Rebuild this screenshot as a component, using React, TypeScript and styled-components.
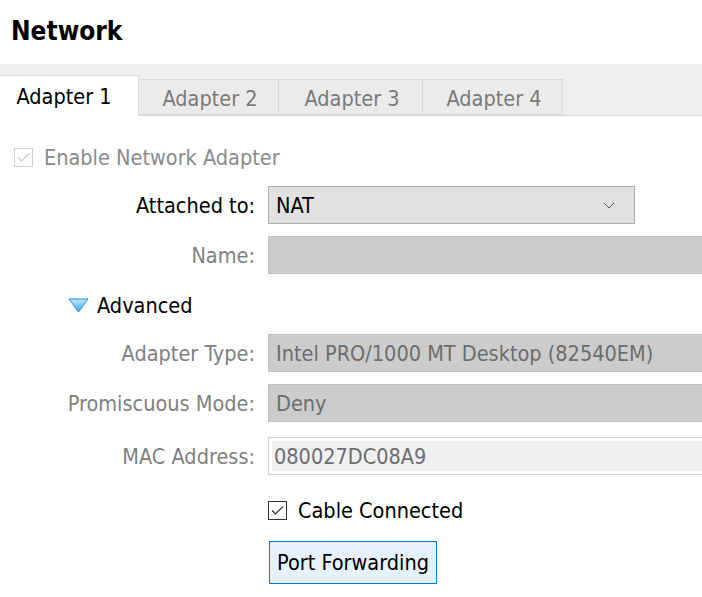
import React from "react";
import styled, { createGlobalStyle } from "styled-components";

const GlobalStyle = createGlobalStyle`
  html, body {
    margin: 0;
    padding: 0;
    background: #ffffff;
  }
  body {
    font-family: "DejaVu Sans Condensed", "DejaVu Sans", sans-serif;
  }
`;

const Page = styled.div`
  width: 702px;
  height: 597px;
  overflow: hidden;
  background: #ffffff;
  color: #000;
`;

const Title = styled.h1`
  margin: 0;
  height: 64px;
  padding-left: 11px;
  font-size: 26px;
  font-weight: bold;
  line-height: 62px;
`;

const TabBar = styled.div`
  display: flex;
  align-items: flex-end;
  height: 52px;
  background: #efefef;
  border-bottom: 1px solid #d9d9d9;
  box-sizing: border-box;
`;

const Tab = styled.div<{ $active?: boolean; $w: number }>`
  box-sizing: border-box;
  width: ${(p) => p.$w}px;
  height: ${(p) => (p.$active ? 41 : 36)}px;
  margin-bottom: ${(p) => (p.$active ? -1 : 0)}px;
  background: ${(p) => (p.$active ? "#ffffff" : "#ebebeb")};
  border: 1px solid #d9d9d9;
  border-bottom: ${(p) => (p.$active ? "none" : "1px solid #d9d9d9")};
  border-left: ${(p) => (p.$active ? "none" : "1px solid #d9d9d9")};
  margin-left: -1px;
  color: ${(p) => (p.$active ? "#000" : "#7a7a7a")};
  font-size: 21.5px;
  display: flex;
  align-items: center;
  justify-content: center;
  padding-top: ${(p) => (p.$active ? 0 : 2)}px;
  padding-right: ${(p) => (p.$active ? 10 : 0)}px;
  padding-left: ${(p) => (p.$active ? 0 : 3)}px;
  &:first-child {
    margin-left: 0;
  }
`;

const Body = styled.div`
  display: flex;
  flex-direction: column;
  font-size: 21.5px;
`;

const CheckRow = styled.label<{ $muted?: boolean; $indent: number; $top: number }>`
  display: flex;
  align-items: center;
  gap: 11px;
  height: 20px;
  margin-top: ${(p) => p.$top}px;
  padding-left: ${(p) => p.$indent}px;
  color: ${(p) => (p.$muted ? "#8a8a8a" : "#000")};
`;

const Box = styled.span<{ $muted?: boolean }>`
  box-sizing: border-box;
  flex: none;
  width: 19px;
  height: 19px;
  border: 1px solid ${(p) => (p.$muted ? "#cfcfcf" : "#333333")};
  background: #fff;
  display: flex;
  align-items: center;
  justify-content: center;
`;

const Row = styled.div<{ $top: number }>`
  display: grid;
  grid-template-columns: 255px 1fr;
  column-gap: 13px;
  align-items: center;
  margin-top: ${(p) => p.$top}px;
`;

const Label = styled.span<{ $muted?: boolean }>`
  text-align: right;
  white-space: nowrap;
  color: ${(p) => (p.$muted ? "#808080" : "#000")};
`;

const Field = styled.div<{ $kind: "select" | "disabled" | "readonly"; $w: number }>`
  box-sizing: border-box;
  width: ${(p) => p.$w}px;
  height: 38px;
  display: flex;
  align-items: center;
  justify-content: space-between;
  padding: 0 ${(p) => (p.$kind === "readonly" ? 5 : 7)}px;
  white-space: nowrap;
  background: ${(p) =>
    p.$kind === "select" ? "#e1e1e1" : p.$kind === "disabled" ? "#cccccc" : "#f0f0f0"};
  border: 1px solid
    ${(p) => (p.$kind === "select" ? "#adadad" : p.$kind === "disabled" ? "#bfbfbf" : "#cccccc")};
  box-shadow: ${(p) => (p.$kind === "readonly" ? "inset 0 0 0 3px #ffffff" : "none")};
  color: ${(p) => (p.$kind === "select" ? "#000" : "#6d6d6d")};
`;

const Chevron = styled.svg`
  margin-right: 12px;
`;

const Expander = styled.div`
  display: flex;
  align-items: center;
  gap: 8px;
  margin-top: 21px;
  padding-left: 68px;
  height: 20px;
`;

const Indented = styled.div<{ $top: number }>`
  margin-top: ${(p) => p.$top}px;
  padding-left: 268px;
`;

const Button = styled.button`
  box-sizing: border-box;
  height: 43px;
  padding: 0 7px;
  background: #e5f1fb;
  border: 1px solid #0078d7;
  font-family: inherit;
  font-size: 21.5px;
  color: #000;
  margin-left: 1px;
`;

const Check = ({ color }: { color: string }) => (
  <svg width="13" height="11" viewBox="0 0 13 11">
    <path d="M1 5.5 L4.5 9 L12 1.5" fill="none" stroke={color} strokeWidth="1.2" />
  </svg>
);

export default function App() {
  return (
    <>
      <GlobalStyle />
      <Page>
        <Title>Network</Title>
        <TabBar>
          <Tab $active $w={139}>Adapter 1</Tab>
          <Tab $w={141}>Adapter 2</Tab>
          <Tab $w={145}>Adapter 3</Tab>
          <Tab $w={141}>Adapter 4</Tab>
        </TabBar>
        <Body>
          <CheckRow $muted $indent={14} $top={31}>
            <Box $muted>
              <Check color="#c8c8c8" />
            </Box>
            Enable Network Adapter
          </CheckRow>
          <Row $top={19}>
            <Label>Attached to:</Label>
            <Field $kind="select" $w={367}>
              NAT
              <Chevron width="12" height="7" viewBox="0 0 12 7">
                <path d="M1 1 L6 6 L11 1" fill="none" stroke="#555" strokeWidth="1" />
              </Chevron>
            </Field>
          </Row>
          <Row $top={12}>
            <Label $muted>Name:</Label>
            <Field $kind="disabled" $w={450} />
          </Row>
          <Expander>
            <svg width="21" height="15" viewBox="0 0 21 15">
              <defs>
                <linearGradient id="tri" x1="0" y1="0" x2="0" y2="1">
                  <stop offset="0" stopColor="#bfeaff" />
                  <stop offset="1" stopColor="#3aa8ec" />
                </linearGradient>
              </defs>
              <path d="M1 1 L20 1 L10.5 14 Z" fill="url(#tri)" stroke="#2a8ad4" strokeWidth="1" />
            </svg>
            Advanced
          </Expander>
          <Row $top={19}>
            <Label $muted>Adapter Type:</Label>
            <Field $kind="disabled" $w={450}>Intel PRO/1000 MT Desktop (82540EM)</Field>
          </Row>
          <Row $top={12}>
            <Label $muted>Promiscuous Mode:</Label>
            <Field $kind="disabled" $w={450}>Deny</Field>
          </Row>
          <Row $top={15}>
            <Label $muted>MAC Address:</Label>
            <Field $kind="readonly" $w={450}>080027DC08A9</Field>
          </Row>
          <CheckRow $indent={268} $top={25}>
            <Box>
              <Check color="#333" />
            </Box>
            Cable Connected
          </CheckRow>
          <Indented $top={21}>
            <Button>Port Forwarding</Button>
          </Indented>
        </Body>
      </Page>
    </>
  );
}
